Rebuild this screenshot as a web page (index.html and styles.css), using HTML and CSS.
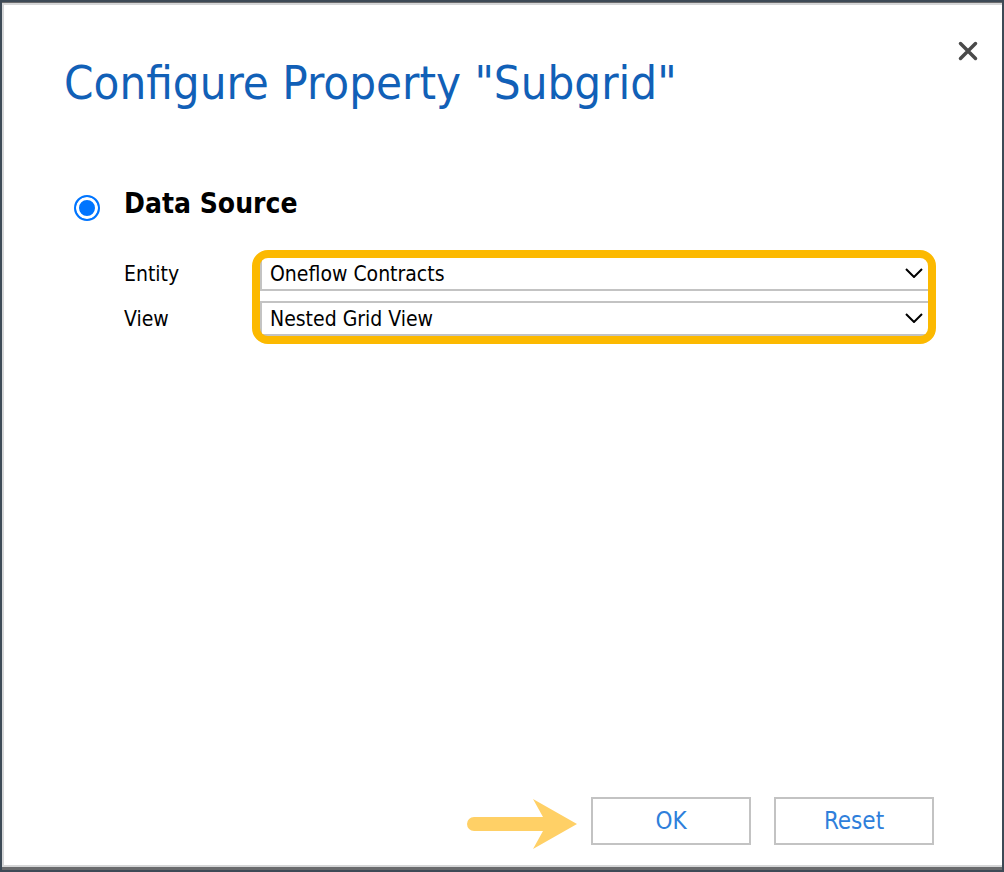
FILE: index.html
```
<!DOCTYPE html>
<html lang="en">

<head>
    <meta charset="UTF-8">
    <meta name="viewport" content="width=device-width, initial-scale=1.0">
    <title>Configure Property</title>
    <link rel="stylesheet" href="styles.css">
</head>

<body>
    <form class="dialog">
        <header class="dialog-header">
            <h1>Configure Property "Subgrid"</h1>
            <button type="button" class="close" aria-label="Close">
                <svg viewBox="0 0 20 20" width="20" height="20">
                    <path d="M2.5 2.5 L17.5 17.5 M17.5 2.5 L2.5 17.5" />
                </svg>
            </button>
        </header>

        <main class="source">
            <input type="radio" id="dataSource" name="source" checked>
            <div class="source-body">
                <label for="dataSource" class="source-title">Data Source</label>
                <div class="fields">
                    <div class="names">
                        <label for="entity">Entity</label>
                        <label for="view">View</label>
                    </div>
                    <div class="choices">
                        <div class="choice">
                            <select id="entity">
                                <option>Oneflow Contracts</option>
                            </select>
                            <svg viewBox="0 0 18 10" width="18" height="10">
                                <path d="M1 1 L9 9 L17 1" />
                            </svg>
                        </div>
                        <div class="choice">
                            <select id="view">
                                <option>Nested Grid View</option>
                            </select>
                            <svg viewBox="0 0 18 10" width="18" height="10">
                                <path d="M1 1 L9 9 L17 1" />
                            </svg>
                        </div>
                    </div>
                </div>
            </div>
        </main>

        <footer class="actions">
            <svg class="arrow" viewBox="0 0 112 54" width="112" height="54">
                <path d="M8 20 H77 L67 2 L111 27 L67 52 L77 34 H8 A7 7 0 0 1 8 20 Z" />
            </svg>
            <button type="submit">OK</button>
            <button type="reset">Reset</button>
        </footer>
    </form>
</body>

</html>
```
FILE: styles.css
```
* {
    box-sizing: border-box;
}

body {
    margin: 0;
    padding: 2px;
    min-height: 100vh;
    display: flex;
    background-color: #3d4a56;
    font-family: Tahoma, "DejaVu Sans Condensed", "Noto Sans", sans-serif;
    font-size: 21px;
    color: black;
}

.dialog {
    flex: 1;
    display: flex;
    flex-direction: column;
    margin: 1px 0 3px;
    padding: 32px 68px 14px 60px;
    background-color: white;
    border: 2px solid #d5d6d7;
    border-right: none;
    box-shadow: 0 -1px 0 #6a6b6d, 0 3px 0 #6a6b6d;
}

.dialog-header {
    display: flex;
    justify-content: space-between;
    align-items: flex-start;
    margin-right: -48px;
}

h1 {
    margin: 16px 0 0;
    font-size: 47px;
    line-height: 60px;
    font-weight: normal;
    color: #1160b7;
}

.close {
    display: flex;
    padding: 4px;
    border: none;
    background: none;
    cursor: pointer;
}

.close path {
    fill: none;
    stroke: #4a4a4a;
    stroke-width: 3.5;
    stroke-linecap: round;
}

.source {
    flex: 1;
    display: flex;
    align-items: flex-start;
    gap: 24px;
    margin-top: 72px;
}

input[type="radio"] {
    appearance: none;
    width: 26px;
    height: 26px;
    margin: 10px 0 0 10px;
    border: 2px solid #0075ff;
    border-radius: 50%;
    background-color: #0075ff;
    box-shadow: inset 0 0 0 3px white;
}

.source-body {
    flex: 1;
}

.source-title {
    display: block;
    font-size: 28px;
    line-height: 38px;
    font-weight: bold;
}

.fields {
    display: flex;
    margin-top: 33px;
}

.names {
    width: 136px;
    display: grid;
    gap: 8px;
    line-height: 37px;
}

.choices {
    flex: 1;
    display: grid;
    align-content: start;
    gap: 10px;
    padding-right: 4px;
    position: relative;
}

/* yellow frame drawn over the two drop-downs */
.choices::after {
    content: "";
    position: absolute;
    inset: -6px -2px -6px -8px;
    border: 8px solid #fcb900;
    border-radius: 16px;
    pointer-events: none;
}

.choice {
    position: relative;
}

select {
    appearance: none;
    display: block;
    width: 100%;
    height: 35px;
    padding: 0 40px 0 8px;
    border: 2px solid #c3c3c3;
    background-color: white;
    color: black;
    font-family: inherit;
    font-size: 21px;
}

.choice svg {
    position: absolute;
    right: 7px;
    top: 12px;
    pointer-events: none;
}

.choice path {
    fill: none;
    stroke: black;
    stroke-width: 2;
}

.actions {
    display: flex;
    justify-content: flex-end;
    align-items: flex-start;
    gap: 23px;
}

.arrow {
    margin-right: -10px;
    fill: #ffd066;
}

.actions button {
    width: 160px;
    height: 48px;
    border: 2px solid #c3c3c3;
    background-color: white;
    color: #2f7fdb;
    font-family: inherit;
    font-size: 24px;
    cursor: pointer;
}
```
